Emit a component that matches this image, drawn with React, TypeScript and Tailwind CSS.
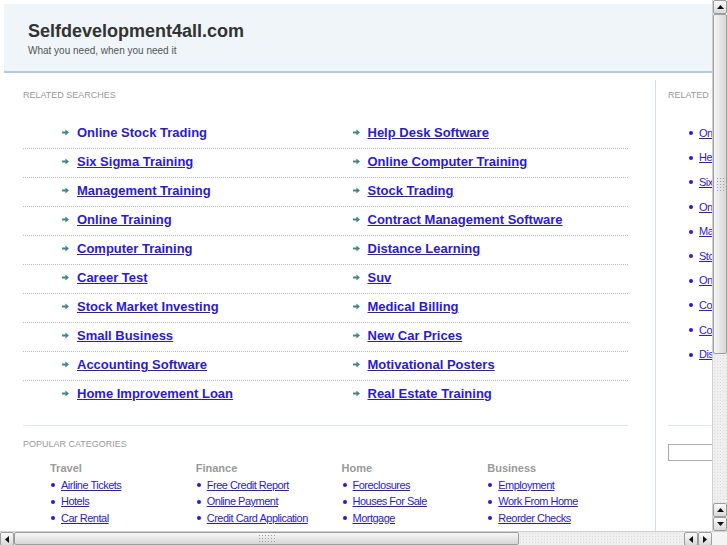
import React from 'react';

const leftLinks = [
  'Online Stock Trading',
  'Six Sigma Training',
  'Management Training',
  'Online Training',
  'Computer Training',
  'Career Test',
  'Stock Market Investing',
  'Small Business',
  'Accounting Software',
  'Home Improvement Loan',
];

const rightLinks = [
  'Help Desk Software',
  'Online Computer Training',
  'Stock Trading',
  'Contract Management Software',
  'Distance Learning',
  'Suv',
  'Medical Billing',
  'New Car Prices',
  'Motivational Posters',
  'Real Estate Training',
];

const sideLinks = [
  'Online Stock Trading',
  'Help Desk Software',
  'Six Sigma Training',
  'Online Computer Training',
  'Management Training',
  'Stock Trading',
  'Online Training',
  'Contract Management Software',
  'Computer Training',
  'Distance Learning',
];

const categories = [
  { name: 'Travel', links: ['Airline Tickets', 'Hotels', 'Car Rental'] },
  { name: 'Finance', links: ['Free Credit Report', 'Online Payment', 'Credit Card Application'] },
  { name: 'Home', links: ['Foreclosures', 'Houses For Sale', 'Mortgage'] },
  { name: 'Business', links: ['Employment', 'Work From Home', 'Reorder Checks'] },
];

function Arrow() {
  return (
    <svg width="7" height="7" viewBox="0 0 7 7" className="shrink-0">
      <polygon points="0,2.6 3.4,2.6 3.4,0.6 7,3.5 3.4,6.4 3.4,4.4 0,4.4" fill="#3d8a83" />
    </svg>
  );
}

function Bullet() {
  return <span className="inline-block h-[4px] w-[4px] shrink-0 rounded-full bg-[#2a1ad6]" />;
}

function SbButton({ dir }: { dir: 'up' | 'down' | 'left' | 'right' }) {
  const pts = {
    up: '0,4 3.5,0 7,4',
    down: '0,0 3.5,4 7,0',
    left: '4,0 0,3.5 4,7',
    right: '0,0 4,3.5 0,7',
  }[dir];
  const vert = dir === 'up' || dir === 'down';
  return (
    <div className="flex h-[14px] w-[14px] shrink-0 items-center justify-center rounded-[2px] border border-[#9d9d9d] bg-gradient-to-b from-[#fbfbfb] to-[#d9d9d9]">
      <svg width={vert ? 7 : 4} height={vert ? 4 : 7} viewBox={vert ? '0 0 7 4' : '0 0 4 7'}>
        <polygon points={pts} fill="#111" />
      </svg>
    </div>
  );
}

function Grip() {
  return (
    <div className="h-[15px] w-[9px] bg-[radial-gradient(circle,#a0a0a0_0.7px,transparent_0.9px)] bg-[length:3px_3px]" />
  );
}

export default function App() {
  return (
    <div
      className="flex h-[545px] w-[727px] flex-col overflow-hidden bg-white"
      style={{ fontFamily: '"Liberation Sans", Arial, sans-serif' }}
    >
      <div className="flex h-[531px]">
        <div className="h-[531px] w-[712px] overflow-hidden">
          <div className="w-[940px] p-[4px]">
            {/* header */}
            <div className="h-[69px] border-b-2 border-[#b0c6ec] bg-[#eff5f8] pl-[24px] pt-[16px]">
              <h1 className="text-[18px] font-bold leading-[22px] text-[#333]">Selfdevelopment4all.com</h1>
              <p className="mt-[3px] text-[10px] leading-[12px] text-[#555]">What you need, when you need it</p>
            </div>

            <div className="mt-[7px] flex">
              {/* left column */}
              <div className="w-[651px] shrink-0 pl-[19px] pt-[10px]">
                <div className="text-[9px] uppercase leading-[11px] text-[#9a9a9a]">Related Searches</div>
                <div className="mt-[19px] w-[605px]">
                  {leftLinks.map((l, i) => (
                    <div
                      key={l}
                      className={`grid grid-cols-2 pb-[8px] pt-[5px] ${i < leftLinks.length - 1 ? 'border-b border-dotted border-[#bdbdbd]' : ''}`}
                    >
                      <div className="flex items-center gap-[8px] pl-[39px]">
                        <Arrow />
                        <a className={`text-[13px] font-bold leading-[15px] text-[#2a1ad6] ${i === 0 ? 'no-underline' : 'underline'}`}>{l}</a>
                      </div>
                      <div className="flex items-center gap-[8px] pl-[27px]">
                        <Arrow />
                        <a className="text-[13px] font-bold leading-[15px] text-[#2a1ad6] underline">{rightLinks[i]}</a>
                      </div>
                    </div>
                  ))}
                </div>
                <div className="mt-[16px] w-[605px] border-t border-[#dde7f5]" />
                <div className="mt-[13px] text-[9px] uppercase leading-[11px] text-[#9a9a9a]">Popular Categories</div>
                <div className="mt-[12px] grid w-[610px] grid-cols-4 pl-[27px]">
                  {categories.map((c) => (
                    <div key={c.name}>
                      <div className="text-[11px] font-bold leading-[13px] text-[#9a9a9a]">{c.name}</div>
                      <div className="mt-[2px]">
                        {c.links.map((l) => (
                          <div key={l} className="flex h-[16.5px] items-center gap-[6px] pl-[1px]">
                            <Bullet />
                            <a className="text-[11px] leading-[13px] tracking-[-0.5px] text-[#2a1ad6] underline">{l}</a>
                          </div>
                        ))}
                      </div>
                    </div>
                  ))}
                </div>
              </div>

              {/* right column */}
              <div className="min-h-[460px] w-[260px] shrink-0 border-l border-[#d3dff1] pl-[12px] pt-[10px]">
                <div className="text-[9px] uppercase leading-[11px] text-[#9a9a9a]">Related Searches</div>
                <div className="mt-[20px] pl-[21px]">
                  {sideLinks.map((l) => (
                    <div key={l} className="flex h-[24.6px] items-center gap-[6px]">
                      <Bullet />
                      <a className="text-[11px] leading-[13px] tracking-[-0.5px] text-[#2a1ad6] underline">{l}</a>
                    </div>
                  ))}
                </div>
                <div className="mt-[58px] w-[200px] border-t border-[#dde7f5]" />
                <input className="mt-[18px] h-[17px] w-[150px] border border-[#aaa] bg-white outline-none" />
              </div>
            </div>
          </div>
        </div>

        {/* vertical scrollbar */}
        <div className="flex h-[531px] w-[15px] flex-col border-l border-[#d0d0d0] bg-[#efefef]">
          <SbButton dir="up" />
          <div className="flex h-[340px] items-center justify-center rounded-[2px] border border-[#9d9d9d] bg-gradient-to-r from-[#f7f7f7] to-[#d6d6d6]">
            <Grip />
          </div>
          <div className="flex-1 bg-[radial-gradient(circle,#dcdcdc_0.5px,transparent_0.8px)] bg-[length:3px_3px]" />
          <SbButton dir="up" />
          <SbButton dir="down" />
        </div>
      </div>

      {/* horizontal scrollbar */}
      <div className="flex h-[14px] border-t border-[#d0d0d0] bg-[#efefef]">
        <SbButton dir="left" />
        <div className="flex w-[505px] items-center justify-center rounded-[2px] border border-[#9d9d9d] bg-gradient-to-b from-[#f7f7f7] to-[#d6d6d6]">
          <div className="h-[9px] w-[18px] bg-[radial-gradient(circle,#a0a0a0_0.7px,transparent_0.9px)] bg-[length:3px_3px]" />
        </div>
        <div className="flex-1 bg-[radial-gradient(circle,#dcdcdc_0.5px,transparent_0.8px)] bg-[length:3px_3px]" />
        <SbButton dir="left" />
        <SbButton dir="right" />
        <div className="w-[15px] bg-[#f4f4f4]" />
      </div>
    </div>
  );
}
